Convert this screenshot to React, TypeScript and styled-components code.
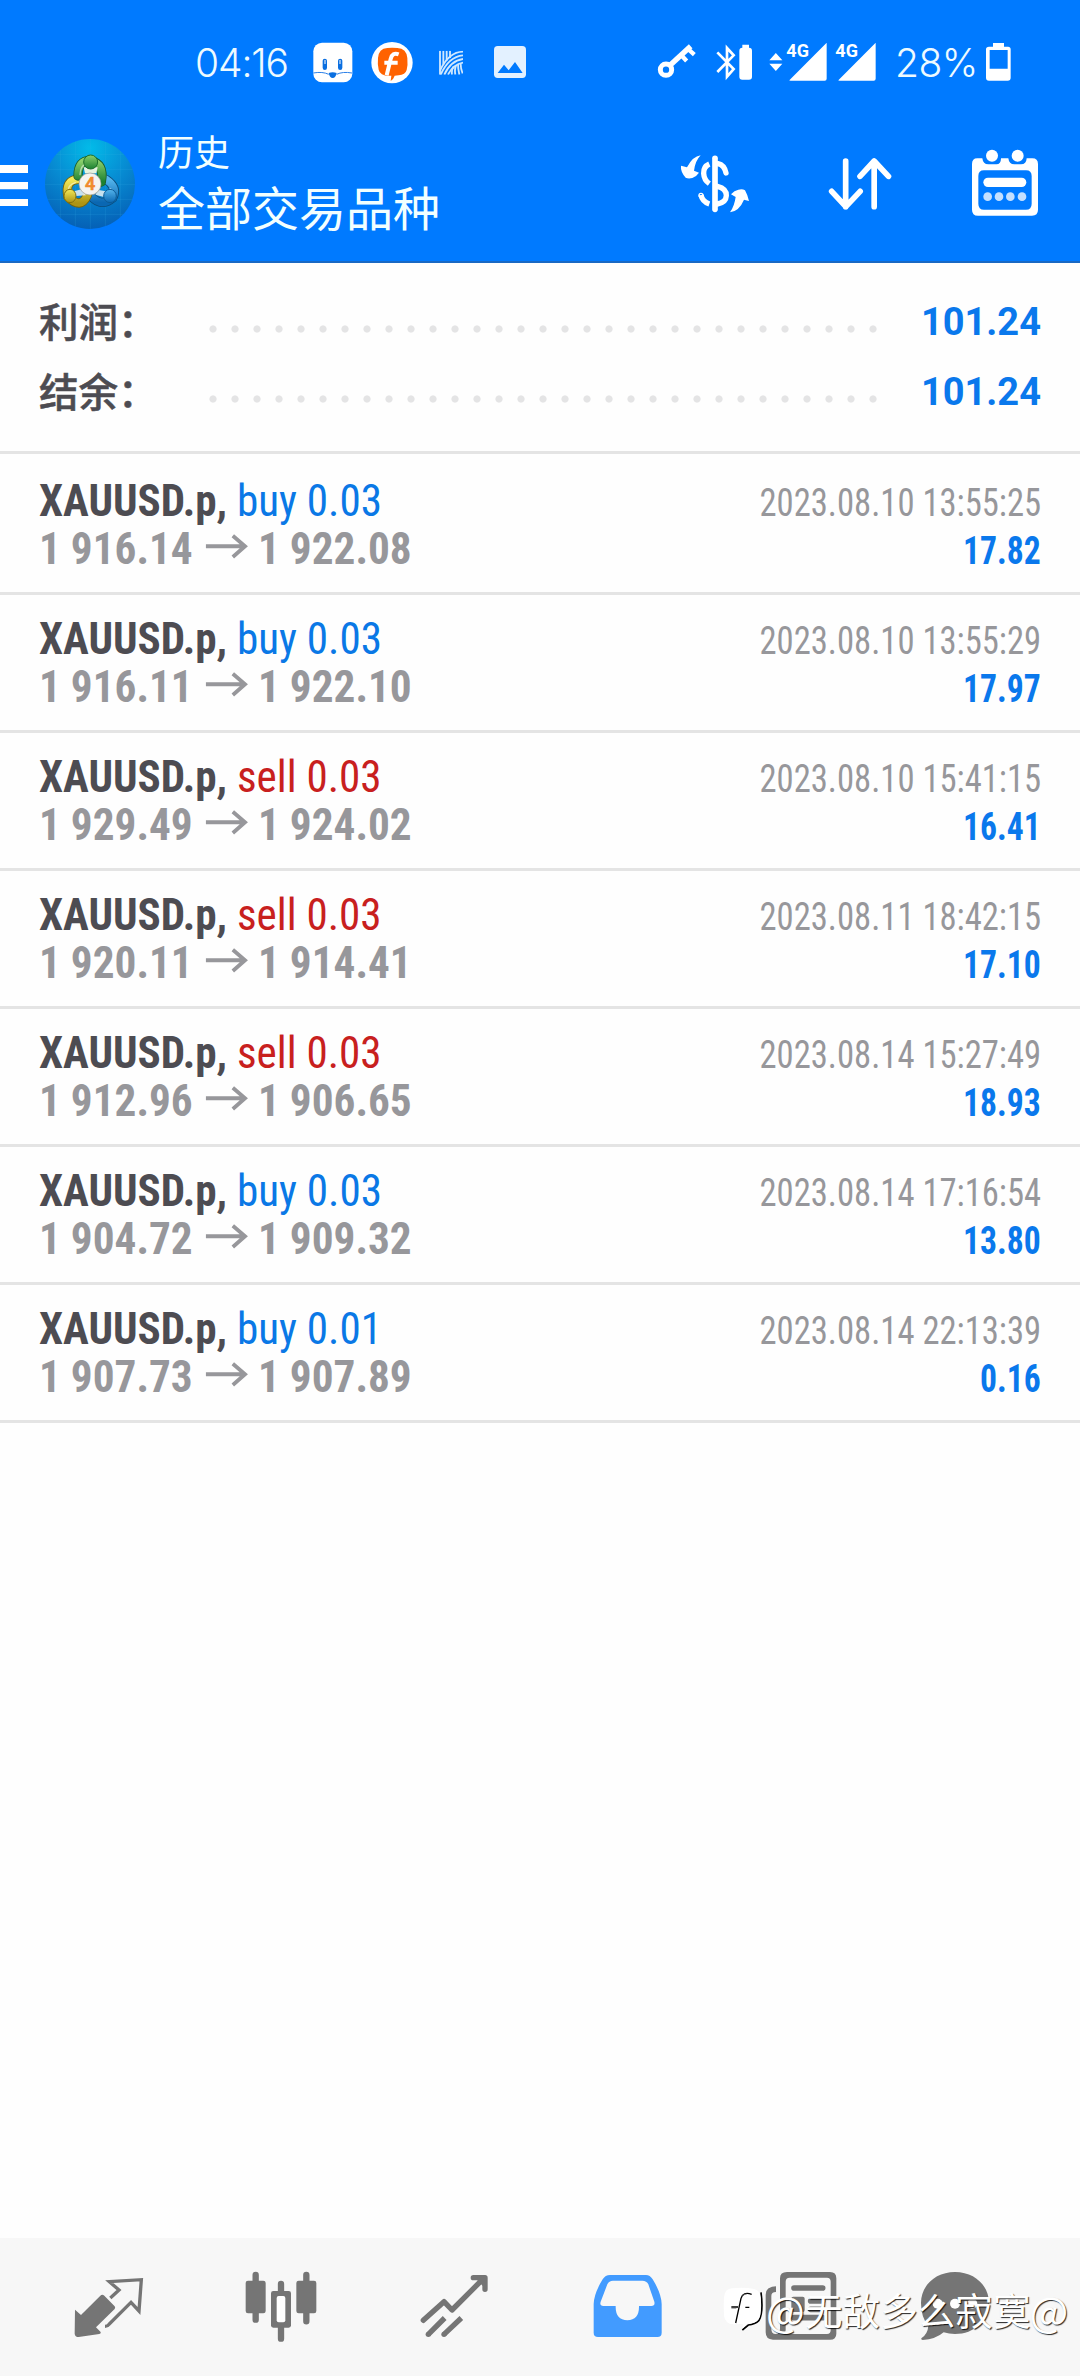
import React from "react";
import styled, { createGlobalStyle } from "styled-components";

const CJK = `Roboto, "Noto Sans CJK SC", sans-serif`;
const CONDENSED = `"Roboto Condensed", Roboto, "Noto Sans CJK SC", sans-serif`;

const GlobalStyle = createGlobalStyle`
  * { box-sizing: border-box; }
  body { margin: 0; background: #fefefe; }
`;

const Screen = styled.div`
  position: relative;
  display: flex;
  flex-direction: column;
  width: 1080px;
  height: 2376px;
  overflow: hidden;
  background: #fefefe;
  font-family: ${CJK};
`;

const Top = styled.header`
  height: 263px;
  background: #007aff;
  border-bottom: 2px solid #1a69c4;
  color: #fff;
`;

const StatusBar = styled.div`
  display: flex;
  height: 100px;
  padding: 30px 69px 0 195px;
`;

const Glyph = styled.svg<{ $w: number; $h: number; $gap?: number }>`
  display: block;
  flex: none;
  width: ${(p) => p.$w}px;
  height: ${(p) => p.$h}px;
  margin-left: ${(p) => p.$gap ?? 0}px;
`;

const StatusText = styled.span<{ $w: number; $gap?: number; $track?: number }>`
  width: ${(p) => p.$w}px;
  margin-left: ${(p) => p.$gap ?? 0}px;
  font: 300 39px/66px Inter, sans-serif;
  letter-spacing: ${(p) => p.$track ?? -0.5}px;
  white-space: nowrap;
  color: #eefaff;
`;

const Spacer = styled.div`
  flex: 1;
`;

const AppBar = styled.div`
  display: flex;
  height: 161px;
  padding-top: 20px;
`;

const Titles = styled.div`
  display: flex;
  flex-direction: column;
  width: 302px;
  margin-left: 21px;
  color: #f2ffff;
  font-family: "Noto Sans CJK SC", sans-serif;
`;

const Subtitle = styled.span`
  font-size: 36px;
  line-height: 40px;
  padding-top: 10px;
`;

const Title = styled.span`
  font-size: 47px;
  line-height: 60px;
  padding-top: 6px;
  white-space: nowrap;
`;

const Summary = styled.section`
  display: flex;
  flex-direction: column;
  height: 191px;
  padding: 24px 39px 0;
  border-bottom: 3px solid #e4e4e4;
`;

const SummaryRow = styled.div`
  display: flex;
  align-items: center;
  height: 70px;
`;

const SummaryLabel = styled.span`
  width: 163px;
  padding-bottom: 5px;
  font: 500 39.5px/65px "Noto Sans CJK SC", sans-serif;
  -webkit-text-stroke: 0.5px #4d4c52;
  color: #4d4c52;
`;

const Dots = styled.div`
  width: 682px;
  height: 22px;
  margin-top: 14px;
  background: radial-gradient(circle at 11px 11px, #e4e4e5 3.2px, transparent 4px) 0 0 / 22px 22px repeat-x;
`;

const SummaryValue = styled.span`
  flex: 1;
  text-align: right;
  font: 700 39px/70px Roboto, sans-serif;
  color: #0a78ec;
  transform: scaleX(0.975);
  transform-origin: right;
`;

const Deals = styled.section`
  display: flex;
  flex-direction: column;
  padding-top: 3px;
`;

const Row = styled.article`
  display: flex;
  flex-direction: column;
  height: 138px;
  padding: 18px 39px 0;
  border-bottom: 3px solid #e4e4e4;
  font-family: ${CONDENSED};
  font-stretch: 75%;
`;

const Line = styled.div`
  display: flex;
  justify-content: space-between;
  align-items: baseline;
  height: 48px;
  line-height: 52px;
  white-space: pre;
`;

const Symbol = styled.span`
  font-size: 45px;
  font-weight: 700;
  color: #4d4c52;
  transform: scaleX(0.957);
  transform-origin: left;
`;

const Side = styled.span<{ $sell: boolean }>`
  font-weight: 400;
  color: ${(p) => (p.$sell ? "#c8201e" : "#0a78e6")};
`;

const Prices = styled.span`
  display: flex;
  align-items: baseline;
  font-size: 45px;
  font-weight: 700;
  color: #97979b;
  transform: scaleX(0.961);
  transform-origin: left;
`;

const Stamp = styled.span`
  font-size: 38px;
  color: #97979b;
  transform: scaleX(0.911);
  transform-origin: right;
`;

const Profit = styled.span`
  font-size: 38px;
  font-weight: 700;
  color: #0a78ec;
  transform: scaleX(0.885);
  transform-origin: right;
`;

const Nav = styled.nav`
  display: flex;
  height: 138px;
  margin-top: auto;
  padding-left: 20px;
  background: #f7f7f7;
`;

const Watermark = styled.div`
  position: absolute;
  left: 722px;
  top: 2284px;
  display: flex;
  align-items: center;
  font: 400 37.6px/50px "Noto Sans CJK SC", sans-serif;
  color: #fff;
  text-shadow: 1px 1px 1px rgba(0, 0, 0, 0.85);
  white-space: nowrap;
`;

const At = styled.span`
  width: 39px;
  margin-left: -1px;
  font-size: 41px;
`;

const deals = [
  ["buy", "0.03", "1 916.14", "1 922.08", "2023.08.10 13:55:25", "17.82"],
  ["buy", "0.03", "1 916.11", "1 922.10", "2023.08.10 13:55:29", "17.97"],
  ["sell", "0.03", "1 929.49", "1 924.02", "2023.08.10 15:41:15", "16.41"],
  ["sell", "0.03", "1 920.11", "1 914.41", "2023.08.11 18:42:15", "17.10"],
  ["sell", "0.03", "1 912.96", "1 906.65", "2023.08.14 15:27:49", "18.93"],
  ["buy", "0.03", "1 904.72", "1 909.32", "2023.08.14 17:16:54", "13.80"],
  ["buy", "0.01", "1 907.73", "1 907.89", "2023.08.14 22:13:39", "0.16"],
];

const FaceIcon = () => (
  <Glyph $w={40} $h={70} $gap={2} viewBox="400 0 120 210">
    <rect x="401" y="38" width="117" height="119" rx="26" fill="#fff" />
    <g fill="#0b6fe0">
      <rect x="429" y="86" width="13" height="34" rx="6.5" />
      <rect x="475" y="86" width="13" height="34" rx="6.5" />
      <path d="M447 129q12-4 24 0q-3 15-12 15t-12-15z" />
    </g>
    <path d="M436 90v12M481 90v12" stroke="#fff" strokeWidth="3" />
    <path d="M401 129q28-5 46 4M517 129q-28-5-46 4" fill="none" stroke="#2b80e8" strokeWidth="3" />
  </Glyph>
);

const ForumIcon = () => (
  <Glyph $w={42} $h={70} $gap={18} viewBox="573 0 126 210">
    <circle cx="636" cy="98" r="62" fill="#fff" />
    <path d="M594 84q2-28 28-30q14-2 30 0q28 2 30 30q2 22-2 36q-4 14-24 16l-12 1q-4 12-12 16l2-16q-34 2-38-18q-4-16-2-35z" fill="#ff6200" />
    <path d="M656 73q-19-7-24 14l-12 49M613 98l40 0" fill="none" stroke="#fff" strokeWidth="12" />
  </Glyph>
);

const WeaveIcon = () => (
  <Glyph $w={24} $h={70} $gap={26} viewBox="777 0 72 210">
    <clipPath id="weave"><rect x="777" y="62" width="72" height="72" /></clipPath>
    <g clipPath="url(#weave)" fill="none" stroke="#cfe8ff" strokeWidth="5.5">
      <path d="M780 62v72M790 62v42M800 62v30M810 62v22" />
      <path d="M780 122Q806 66 849 65M782 134Q806 80 849 76M793 134Q812 92 849 87M804 134Q820 103 849 98" />
      <path d="M816 134q-2-14 4-24M826 134q-3-16 2-28M838 134q-4-18-4-32M848 130q-6-14-6-28" />
    </g>
  </Glyph>
);

const PictureIcon = () => (
  <Glyph $w={32} $h={70} $gap={31} viewBox="942 0 96 210">
    <rect x="942" y="48" width="96" height="96" rx="11" fill="#e3f1ff" />
    <path d="M953 129l19-25 14 17 19-25 23 33z" fill="#007aff" />
  </Glyph>
);

const KeyIcon = () => (
  <Glyph $w={39} $h={70} viewBox="48 0 117 210">
    <g fill="none" stroke="#fff">
      <circle cx="75" cy="119" r="17" strokeWidth="15" />
      <path d="M88 105L149 49" strokeWidth="16" />
      <path d="M141 57L160 74M121 76L137 93" strokeWidth="13" />
    </g>
  </Glyph>
);

const BluetoothIcon = () => (
  <Glyph $w={38} $h={70} $gap={20} viewBox="225 0 114 210">
    <path d="M229 67l49 50-20 23V54l20 22-49 50" fill="none" stroke="#fff" strokeWidth="8" />
    <path d="M304 53v-9h20v9q9 0 9 9v78q0 9-9 9h-20q-9 0-9-9V62q0-9 9-9z" fill="#fff" />
  </Glyph>
);

const DataArrows = () => (
  <Glyph $w={14} $h={70} $gap={15.5} viewBox="386 0 42 210">
    <path d="M387 91l19.500-22 19.500 22zM387 101l19.500 22 19.500-22z" fill="#fff" />
  </Glyph>
);

const Signal = ({ gap }: { gap: number }) => (
  <Glyph $w={41} $h={70} $gap={gap} viewBox="435 0 123 210">
    <path d="M445 151L557 38v108q0 6-6 6h-102q-5 0-4-1z" fill="#fff" />
    <text x="436" y="81" fill="#fff" fontFamily="Roboto" fontWeight="700" fontSize="55" textLength="68" lengthAdjust="spacingAndGlyphs" stroke="#007aff" strokeWidth="5" paintOrder="stroke">4G</text>
  </Glyph>
);

const BatteryIcon = () => (
  <Glyph $w={25} $h={70} viewBox="1038 0 75 210">
    <path d="M1047 50h12V39h33v11h12q8 0 8 8v85q0 9-9 9h-56q-9 0-9-9V58q0-8 9-8zM1049 60v56h54V60z" fill="#fff" fillRule="evenodd" />
  </Glyph>
);

const MenuIcon = () => (
  <Glyph $w={28} $h={138} viewBox="0 0 84 414">
    <path d="M0 135h84v24H0zM0 186h84v22H0zM0 237h84v21H0z" fill="#fff" />
  </Glyph>
);

const LogoIcon = () => (
  <Glyph $w={92} $h={138} $gap={17} viewBox="135 0 276 414">
    <defs>
      <radialGradient id="disc" cx="50%" cy="10%" r="90%">
        <stop offset="0" stopColor="#02bbe9" />
        <stop offset="0.5" stopColor="#078bd2" />
        <stop offset="1" stopColor="#0560b6" />
      </radialGradient>
      <linearGradient id="green" x2="0" y2="1"><stop stopColor="#8bd06c" /><stop offset="1" stopColor="#1c8131" /></linearGradient>
      <linearGradient id="gold" x2="0" y2="1"><stop stopColor="#f4ea58" /><stop offset="1" stopColor="#ad9413" /></linearGradient>
      <linearGradient id="sky" x2="0" y2="1"><stop stopColor="#55b5ec" /><stop offset="1" stopColor="#0a67b2" /></linearGradient>
      <clipPath id="round"><circle cx="270" cy="192" r="135" /></clipPath>
    </defs>
    <circle cx="270" cy="192" r="135" fill="url(#disc)" />
    <path clipPath="url(#round)" d="M182 57v270M226 57v270M271 57v270M316 57v270M361 57v270M135 104h270M135 148h270M135 193h270M135 238h270M135 283h270" stroke="#3bb4e8" strokeOpacity=".35" strokeWidth="1.500" />
    <g strokeLinecap="round" fill="none">
      <path d="M318 178Q354 202 338 234Q298 268 262 214" stroke="#0a4c7c" strokeWidth="28" />
      <path d="M318 178Q354 202 338 234Q298 268 262 214" stroke="url(#sky)" strokeWidth="23" />
      <path d="M233 178Q194 180 204 230Q242 270 262 226" stroke="#75640c" strokeWidth="28" />
      <path d="M233 178Q194 180 204 230Q242 270 262 226" stroke="url(#gold)" strokeWidth="23" />
      <path d="M234 168Q234 120 271 122Q314 132 304 186" stroke="#1a5c29" strokeWidth="28" />
      <path d="M234 168Q234 120 271 122Q314 132 304 186" stroke="url(#green)" strokeWidth="23" />
      <path d="M240 164Q242 136 258 132M204 216Q204 194 226 188M330 206Q346 216 338 226" stroke="#fff" strokeOpacity=".5" strokeWidth="4" />
    </g>
    <path d="M251 142h42l-4 18h-34z" fill="#e6f3df" />
    <path d="M222 214l22-6 14 18-30 2zM318 214l-22-4-10 14 28 8z" fill="#e9f1f4" fillOpacity=".85" />
    <circle cx="272" cy="126" r="21" fill="url(#green)" stroke="#1b6f2c" strokeWidth="3" />
    <ellipse cx="210" cy="228" rx="18" ry="20" fill="url(#gold)" stroke="#85700c" strokeWidth="3" />
    <ellipse cx="330" cy="228" rx="19" ry="20" fill="url(#sky)" stroke="#0c5b96" strokeWidth="3" />
    <circle cx="270" cy="192" r="33" fill="#f5f3f0" stroke="#9b9a8e" strokeWidth="2" />
    <text x="270" y="211" textAnchor="middle" fill="#f08a2c" stroke="#f08a2c" strokeWidth="2" fontFamily="Roboto" fontWeight="500" fontSize="54">4</text>
  </Glyph>
);

const ExchangeIcon = () => (
  <Glyph $w={70} $h={138} viewBox="90 -30 210 414">
    <path d="M152 76q-24 3-41 36l-18-5q-2 18 14 36q8 4 20 1q12-4 20-16l-15-6q4-30 20-46zM240 247q28-4 42-38l15 4q-4-18-12-32q-8-6-20-2q-12 2-22 14l14 8q-4 28-17 46z" fill="#fff" />
    <g fill="none" stroke="#fff" strokeLinecap="round">
      <path d="M195 85v153" strokeWidth="17" />
      <path d="M204 101q19 4 24 28M202 169q28 7 27 28t-27 25" strokeWidth="16" />
      <path d="M178 102q-18 8-17 28t17 31M153 195q4 20 25 27" strokeWidth="16" strokeLinecap="butt" />
      <circle cx="153" cy="196" r="2" strokeWidth="12" />
    </g>
  </Glyph>
);

const SortIcon = () => (
  <Glyph $w={64} $h={138} $gap={78} viewBox="537 -30 192 414">
    <path d="M590 93v137M548 184l42.500 46 43-46M675.500 230V94M633 139l42.500-46 43 46" fill="none" stroke="#fff" strokeWidth="17" strokeLinecap="round" strokeLinejoin="round" />
  </Glyph>
);

const CalendarIcon = () => (
  <Glyph $w={66} $h={138} $gap={80} viewBox="968 -30 198 414">
    <path d="M984 85h15q2 18 18 18h24q14 0 14-18h22q2 18 18 18h20q16 0 17-18h17q17 0 17 17v137q0 18-18 18H986q-18 0-18-18V102q0-17 16-17zM1004 121q-17 0-17 17v83q0 18 17 18h126q17 0 17-18v-83q0-17-17-17z" fill="#fff" fillRule="evenodd" />
    <circle cx="1028" cy="77" r="18" fill="#fff" />
    <circle cx="1105" cy="77" r="18" fill="#fff" />
    <rect x="1002" y="143" width="129" height="28" rx="14" fill="#fff" />
    <g fill="#c5e0ff">
      <circle cx="1015" cy="200" r="13" /><circle cx="1049" cy="200" r="13" />
      <circle cx="1083" cy="200" r="13" /><circle cx="1118" cy="200" r="13" />
    </g>
  </Glyph>
);

const ArrowIcon = () => (
  <Glyph $w={45} $h={30} $gap={13} viewBox="612 251 135 90">
    <path d="M614 288h118M698 256l38 32-38 32" fill="none" stroke="#97979b" strokeWidth="12" />
  </Glyph>
);

const QuotesIcon = () => (
  <Glyph $w={174} $h={138} viewBox="-60 24 522 414">
    <path d="M105 239l18 16 58-58q6-6 12 0l31 32q3 4 0 8l-56 55 14 14q2 5-4 6l-62 9q-11 0-12-10z" fill="#757575" />
    <path d="M211 204l26-24-29-25 96-6-7 94-24-26-66 66q-4 6-12 6" fill="none" stroke="#757575" strokeWidth="10" />
  </Glyph>
);

const ChartIcon = () => (
  <Glyph $w={174} $h={138} viewBox="462 24 522 414">
    <path d="M647 135v134M799 135v139M723 162v30M723 284v42" stroke="#757575" strokeWidth="19" strokeLinecap="round" />
    <rect x="617" y="152" width="60" height="98" rx="7" fill="#757575" />
    <rect x="769" y="152" width="60" height="98" rx="7" fill="#757575" />
    <rect x="693" y="183" width="60" height="110" rx="7" fill="#757575" />
    <rect x="710" y="198" width="26" height="79" rx="6" fill="#fff" />
  </Glyph>
);

const TradeIcon = () => (
  <Glyph $w={174} $h={138} viewBox="-36 24 522 414">
    <g fill="none" stroke="#757575" strokeWidth="16" strokeLinecap="round" strokeLinejoin="round">
      <path d="M130 271l62-56 24 25 93-93" />
      <path d="M280 143h35v35" />
    </g>
    <path d="M316 136v40l-30-32z" fill="#757575" />
    <path d="M145 313l49-49M192 313l52-49" stroke="#757575" strokeWidth="16" />
    <circle cx="145" cy="313" r="8" fill="#757575" />
    <circle cx="192" cy="313" r="8" fill="#757575" />
  </Glyph>
);

const HistoryIcon = () => (
  <Glyph $w={174} $h={138} viewBox="486 24 522 414">
    <path d="M690 135h108q12 0 20 13q26 42 27 74v86q0 13-13 13H654q-13 0-13-13v-86q1-32 27-74q8-13 22-13zM699 152q-12 0-17 11l-20 52q-4 13 8 13h37q-1 42 35 43q36-1 35-43h37q12 0 9-13l-18-52q-5-11-18-11z" fill="#429bff" fillRule="evenodd" />
  </Glyph>
);

const NewsIcon = () => (
  <Glyph $w={174} $h={138} viewBox="48 24 522 414">
    <path d="M261 126h129q19 0 19 19v166q0 18-19 18H219q-22 0-22-22V194q0-24 31-25v17q-14 0-14 12v98q0 16 13 16t13-16V145q0-19 21-19zM269 143q-12 0-12 12v145q0 6-5 12h129q11 0 11-11V155q0-12-11-12z" fill="#757575" fillRule="evenodd" />
    <path d="M282 174h86M332 213h36M332 238h36M282 263h86" stroke="#757575" strokeWidth="17" strokeLinecap="round" />
    <rect x="274" y="200" width="40" height="46" rx="6" fill="#757575" />
  </Glyph>
);

const ChatIcon = () => (
  <Glyph $w={174} $h={138} viewBox="570 24 522 414">
    <path d="M765 126c58 0 102 40 102 93s-44 93-102 93q-18 0-34-5q-24 21-63 23q-7-1-3-6q18-12 20-36q-22-26-22-69c0-53 44-93 102-93z" fill="#757575" />
    <g fill="#fff"><circle cx="713" cy="221" r="15" /><circle cx="765" cy="221" r="15" /><circle cx="817" cy="221" r="15" /></g>
  </Glyph>
);

const MarkLogo = () => (
  <Glyph $w={45} $h={50} viewBox="66 187 135 150">
    <path d="M183 212q8 60-6 84q-12 12-32 14l-18 15" fill="none" stroke="#000" strokeWidth="5" />
    <path d="M72 226q2-24 24-26q36-4 66 2q18 3 20 26q2 30-1 52q-4 22-28 25l-12 1-14 16 2-15-28 1q-26-2-29-26q-2-28 0-56z" fill="#fff" />
    <path d="M155 218q-26-9-32 12l-16 74M94 256h20M136 257h12" fill="none" stroke="#000" strokeWidth="4" />
    <path d="M94 260h15M126 224q4-6 14-7" fill="none" stroke="#777" strokeWidth="2" />
  </Glyph>
);

export default function App() {
  return (
    <Screen>
      <GlobalStyle />
      <Top>
        <StatusBar>
          <StatusText $w={116} $track={-1.1}>04:16</StatusText>
          <FaceIcon />
          <ForumIcon />
          <WeaveIcon />
          <PictureIcon />
          <Spacer />
          <KeyIcon />
          <BluetoothIcon />
          <DataArrows />
          <Signal gap={2.5} />
          <Signal gap={8} />
          <StatusText $w={91} $gap={19.5}>28%</StatusText>
          <BatteryIcon />
        </StatusBar>
        <AppBar>
          <MenuIcon />
          <LogoIcon />
          <Titles>
            <Subtitle>历史</Subtitle>
            <Title>全部交易品种</Title>
          </Titles>
          <Glyph $w={220} $h={138} />
          <ExchangeIcon />
          <SortIcon />
          <CalendarIcon />
        </AppBar>
      </Top>
      <Summary>
        {["利润", "结余"].map((label) => (
          <SummaryRow key={label}>
            <SummaryLabel>{label}：</SummaryLabel>
            <Dots />
            <SummaryValue>101.24</SummaryValue>
          </SummaryRow>
        ))}
      </Summary>
      <Deals>
        {deals.map(([side, volume, open, close, time, profit]) => (
          <Row key={time}>
            <Line>
              <Symbol>
                XAUUSD.p, <Side $sell={side === "sell"}>{side} {volume}</Side>
              </Symbol>
              <Stamp>{time}</Stamp>
            </Line>
            <Line>
              <Prices>
                {open}
                <ArrowIcon />
                <Glyph $w={10} $h={1} />
                {close}
              </Prices>
              <Profit>{profit}</Profit>
            </Line>
          </Row>
        ))}
      </Deals>
      <Nav>
        <QuotesIcon />
        <ChartIcon />
        <TradeIcon />
        <HistoryIcon />
        <NewsIcon />
        <ChatIcon />
      </Nav>
      <Watermark>
        <MarkLogo />
        <At>@</At>
        无敌多么寂寞
        <At>@</At>
      </Watermark>
    </Screen>
  );
}
